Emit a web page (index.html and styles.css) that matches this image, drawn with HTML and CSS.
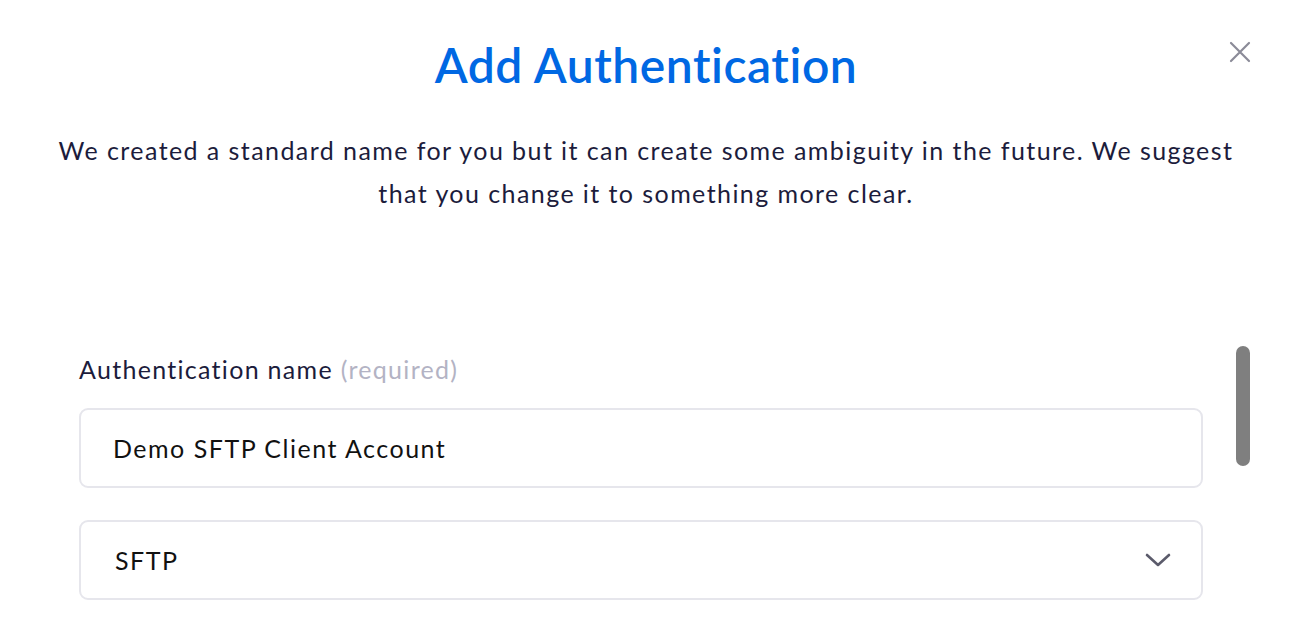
FILE: index.html
```html
<!DOCTYPE html>
<html lang="en">
<head>
<meta charset="utf-8">
<title>Add Authentication</title>
<link rel="stylesheet" href="styles.css">
</head>
<body>
<div class="modal">
  <button class="close" aria-label="Close">
    <svg width="22" height="22" viewBox="0 0 22 22"><path d="M2 2 L20 20 M20 2 L2 20" stroke="#8b8b98" stroke-width="2.2" stroke-linecap="round" fill="none"/></svg>
  </button>
  <header class="head">
    <h1 class="title">Add Authentication</h1>
    <p class="intro">We created a standard name for you but it can create some ambiguity in the future. We suggest that you change it to something more clear.</p>
  </header>
  <div class="body">
    <form class="form">
      <label class="label">Authentication name <span class="req">(required)</span></label>
      <div class="field">Demo SFTP Client Account</div>
      <div class="field select">
        <span>SFTP</span>
        <svg class="chev" width="26" height="16" viewBox="0 0 26 16"><path d="M2 3 L13 13 L24 3" stroke="#5b5b6b" stroke-width="2.6" stroke-linecap="round" stroke-linejoin="round" fill="none"/></svg>
      </div>
    </form>
    <div class="thumb"></div>
  </div>
</div>
</body>
</html>
```
FILE: styles.css
```css
* { box-sizing: border-box; }
html, body { margin: 0; padding: 0; background: #fff; }
body {
  font-family: Lato, "Noto Sans", sans-serif;
  color: #1c1c3c;
  width: 1292px;
  height: 644px;
  overflow: hidden;
}
.modal { position: relative; width: 1292px; height: 644px; }
.close {
  position: absolute;
  top: 41px;
  left: 1229px;
  background: none;
  border: 0;
  padding: 0;
  width: 22px;
  height: 22px;
  cursor: pointer;
}
.close svg { display: block; }
.head { text-align: center; padding-top: 33px; }
.title {
  margin: 0;
  font-size: 48px;
  line-height: 64px;
  font-weight: 600;
  color: #0068e3;
  letter-spacing: 0.55px;
}
.intro {
  margin: 32px auto 0;
  width: 1200px;
  font-size: 25px;
  line-height: 43px;
  letter-spacing: 1.43px;
  color: #1c1c3c;
}
.body { position: relative; padding: 137px 89px 0 79px; }
.form { display: flex; flex-direction: column; width: 1124px; }
.label { font-size: 25px; line-height: 34px; letter-spacing: 1.3px; color: #1c1c3c; }
.req { color: #b3b3c4; }
.field {
  height: 80px;
  border: 2px solid #e6e6ec;
  border-radius: 9px;
  display: flex;
  align-items: center;
  padding: 0 32px;
  font-size: 25px;
  letter-spacing: 1.5px;
  color: #111;
}
.form .field:first-of-type { margin-top: 22px; }
.select { margin-top: 32px; justify-content: space-between; padding-left: 34px; padding-right: 30px; }
.chev { display: block; }
.thumb {
  position: absolute;
  left: 1236px;
  top: 131px;
  width: 14px;
  height: 120px;
  border-radius: 7px;
  background: #7f7f7f;
}
```
